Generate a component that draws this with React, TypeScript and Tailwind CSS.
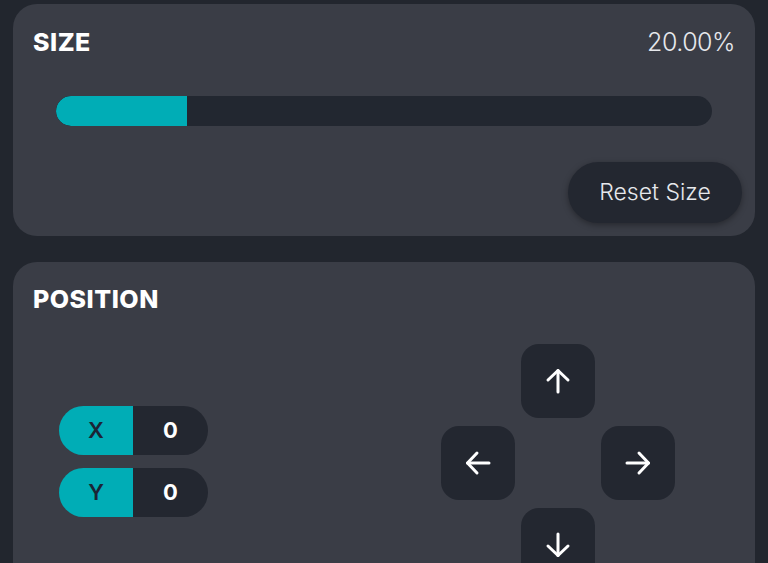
import React from "react";

const Arrow = ({ dir }: { dir: "up" | "down" | "left" | "right" }) => {
  const rot = { up: 0, right: 90, down: 180, left: 270 }[dir];
  return (
    <svg width="26" height="26" viewBox="0 0 26 26" fill="none" stroke="white" strokeWidth="3" strokeLinecap="round" strokeLinejoin="round" style={{ transform: `rotate(${rot}deg)` }}>
      <path d="M13 24V2.5" />
      <path d="M3 12L13 2.5 23 12" />
    </svg>
  );
};

const DBtn = ({ dir }: { dir: "up" | "down" | "left" | "right" }) => (
  <button className="w-[74px] h-[74px] rounded-[18px] bg-[#232730] flex items-center justify-center">
    <Arrow dir={dir} />
  </button>
);

const Pill = ({ label }: { label: string }) => (
  <div className="flex w-[149px] h-[49px] rounded-full overflow-hidden">
    <div className="w-[74px] bg-[#00adb6] flex items-center justify-center text-[22px] font-semibold text-[#1b2535]">{label}</div>
    <div className="flex-1 bg-[#232730] flex items-center justify-center text-[22px] font-bold text-white">0</div>
  </div>
);

export default function App() {
  return (
    <div
      className="w-[768px] h-[563px] overflow-hidden bg-[#22262e] pt-[4px] px-[13px] flex flex-col"
      style={{ fontFamily: "Inter, 'Noto Sans', sans-serif" }}
    >
      <div className="rounded-[24px] bg-[#3a3d46] pt-[24px] px-[13px] pb-[13px] flex flex-col">
        <div className="h-[30px] px-[7px] flex items-center justify-between">
          <span className="text-[25px] font-extrabold tracking-[0.5px] text-white">SIZE</span>
          <span className="text-[25px] font-light text-[#e6e8ec] tracking-[-0.5px]">20.00%</span>
        </div>
        <div className="mt-[38px] mx-[30px] h-[30px] rounded-full bg-[#222730] overflow-hidden flex">
          <div className="h-full bg-[#00adb6] rounded-l-full" style={{ width: "20%" }} />
        </div>
        <div className="mt-[36px] flex justify-end">
          <button className="w-[174px] h-[61px] rounded-full bg-[#232730] text-[23px] font-light text-[#e6e8ec] shadow-[0_2px_6px_rgba(0,0,0,0.35)] flex items-center justify-center">
            Reset Size
          </button>
        </div>
      </div>

      <div className="mt-[26px] flex-1 rounded-t-[24px] bg-[#3a3d46] pt-[23px] px-[20px] flex flex-col">
        <div className="h-[30px] flex items-center">
          <span className="text-[25px] font-extrabold tracking-[0.5px] text-white">POSITION</span>
        </div>
        <div className="mt-[29px] flex items-center">
          <div className="ml-[26px] -mt-[3px] flex flex-col gap-[13px]">
            <Pill label="X" />
            <Pill label="Y" />
          </div>
          <div className="ml-[233px] grid grid-cols-[74px_74px_74px] gap-x-[6px] gap-y-[8px]">
            <div />
            <DBtn dir="up" />
            <div />
            <DBtn dir="left" />
            <div />
            <DBtn dir="right" />
            <div />
            <DBtn dir="down" />
            <div />
          </div>
        </div>
      </div>
    </div>
  );
}
